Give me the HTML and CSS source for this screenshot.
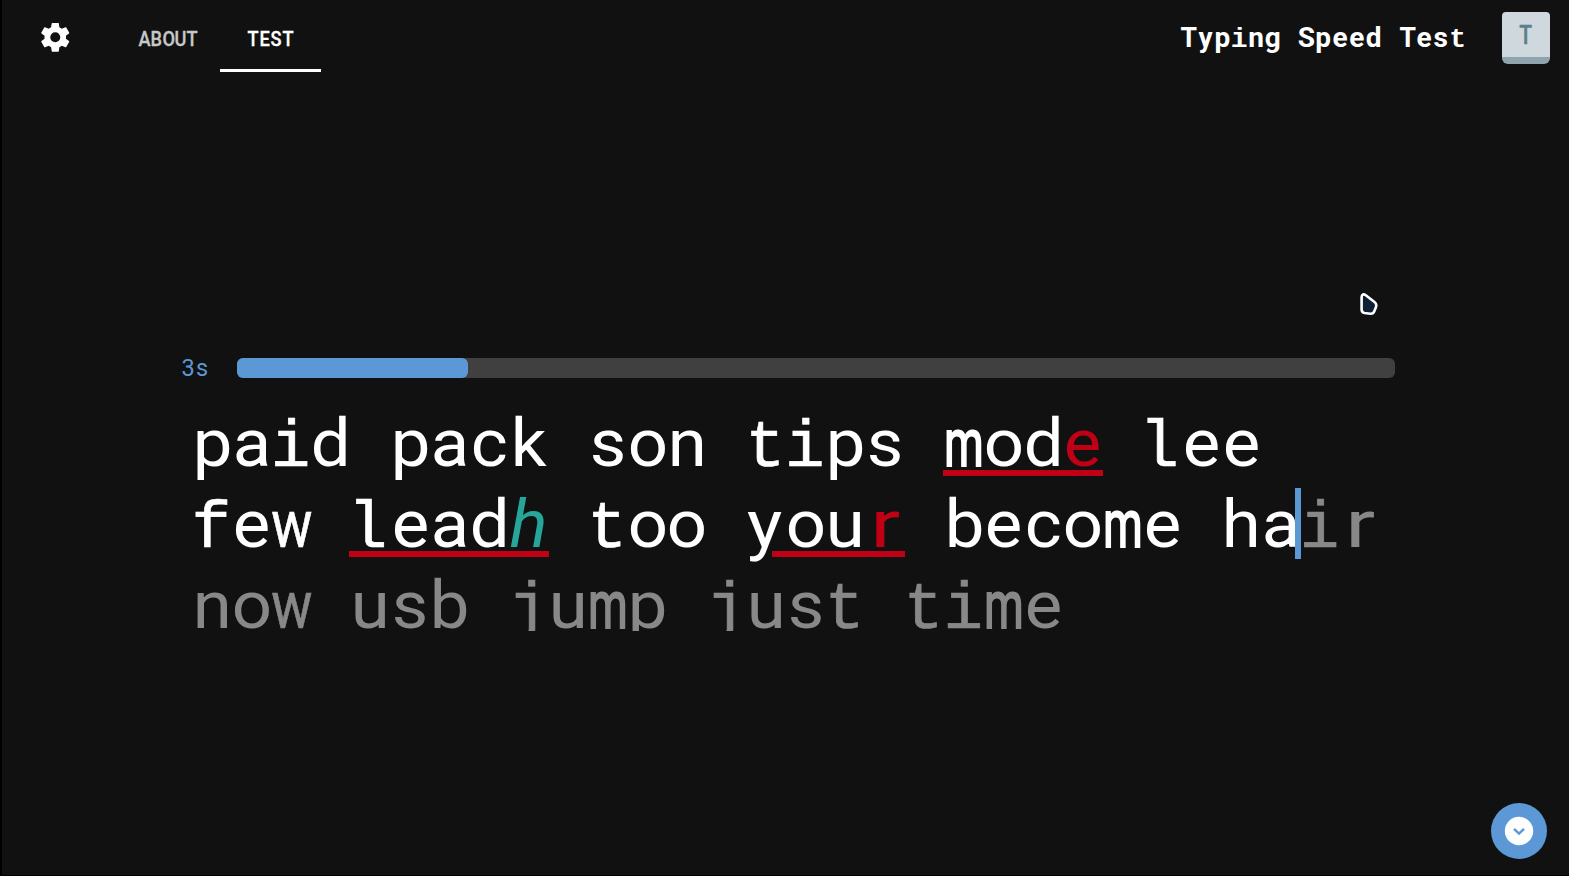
FILE: index.html
```html
<!DOCTYPE html>
<html lang="en">
<head>
<meta charset="utf-8">
<title>Typing Speed Test</title>
<link rel="stylesheet" href="styles.css">
</head>
<body>
<div class="app">
  <header class="topbar">
    <svg class="gear" viewBox="0 0 24 24"><path d="M12 15.5A3.5 3.5 0 0 1 8.5 12 3.5 3.5 0 0 1 12 8.5a3.5 3.5 0 0 1 3.5 3.5 3.5 3.5 0 0 1-3.5 3.5m7.43-2.53c.04-.32.07-.64.07-.97s-.03-.66-.07-1l2.11-1.63c.19-.15.24-.42.12-.64l-2-3.46c-.12-.22-.39-.31-.61-.22l-2.49 1c-.52-.39-1.06-.73-1.69-.98l-.37-2.65A.506.506 0 0 0 14 2h-4c-.25 0-.46.18-.5.42l-.37 2.65c-.63.25-1.17.59-1.69.98l-2.49-1c-.22-.09-.49 0-.61.22l-2 3.46c-.13.22-.07.49.12.64L4.57 11c-.04.34-.07.67-.07 1s.03.65.07.97l-2.11 1.66c-.19.15-.25.42-.12.64l2 3.46c.12.22.39.3.61.22l2.49-1.01c.52.4 1.06.74 1.69.99l.37 2.65c.04.24.25.42.5.42h4c.25 0 .46-.18.5-.42l.37-2.65c.63-.26 1.17-.59 1.69-.99l2.49 1.01c.22.08.49 0 .61-.22l2-3.46c.12-.22.07-.49-.12-.64z"/></svg>
    <nav class="tabs">
      <a class="tab"><span class="cells">ABOUT</span></a>
      <a class="tab active"><span class="cells">TEST</span></a>
    </nav>
    <h1 class="title"><span class="cells">Typing</span><span class="cells">Speed</span><span class="cells">Test</span></h1>
    <div class="key"><span>T</span></div>
  </header>

  <main class="test">
    <div class="timer">
      <span class="seconds cells">3s</span>
      <div class="track"><div class="fill" style="width:19.95%"></div></div>
    </div>
    <div class="words">
      <div class="line typed">
        <span class="word cells">paid</span><span class="word cells">pack</span><span class="word cells">son</span><span class="word cells">tips</span>
        <span class="word wrong"><span class="cells">mod</span><span class="cells miss">e</span></span>
        <span class="word cells">lee</span>
      </div>
      <div class="line typed">
        <span class="word cells">few</span>
        <span class="word wrong"><span class="cells">lead</span><span class="cells extra">h</span></span>
        <span class="word cells">too</span>
        <span class="word wrong skip"><span class="cells">you</span><span class="cells miss">r</span></span>
        <span class="word cells">become</span>
        <span class="word current"><span class="cells">ha</span><span class="caret"></span><span class="cells todo">ir</span></span>
      </div>
      <div class="line todo">
        <span class="word cells">now</span><span class="word cells">usb</span><span class="word cells">jump</span><span class="word cells">just</span><span class="word cells">time</span>
      </div>
    </div>
  </main>

  <svg class="pointer" viewBox="0 0 20 26"><path d="M3.2 3.2Q4.5 1.6 6.5 3L15.5 10Q18 12 17 15L15.2 19.5Q14.2 22 11.5 21.7L5.5 21Q2.6 20.5 2.6 17.5V5.5Q2.6 4 3.2 3.2Z"/></svg>
  <div class="fab">
    <svg viewBox="0 0 56 56"><circle cx="28" cy="28" r="14.2"/><path d="M23 25.8 28 30.6 33 25.8"/></svg>
  </div>
</div>
<script src="cells.js"></script>
</body>
</html>
```
FILE: styles.css
```css
* { box-sizing: border-box; }
body { margin: 0; background: #000; }
.app {
  position: relative;
  height: 875px;
  margin-left: 2px;
  background: #111;
  color: #fff;
  font-family: Roboto, sans-serif;
  overflow: hidden;
}

/* Fixed-pitch lettering */
.cells { display: inline-flex; align-items: baseline; }
.cell { display: flex; justify-content: center; width: .6em; flex: none; white-space: pre; }
.cell b { display: block; font-weight: inherit; transform-origin: 50% 50%; }
.slab b { font-family: "Liberation Mono", monospace; }

.topbar { display: flex; align-items: flex-start; height: 88px; padding-left: 35.5px; padding-right: 19px; }
.gear { width: 34.5px; height: 34.5px; margin-top: 20.3px; fill: #fff; }
.tabs { display: flex; margin-left: 42px; }
.tab {
  height: 72px;
  padding: 0 23px 0 25px;
  line-height: 79px;
  font-size: 19.8px;
  font-weight: 500;
  color: #c8c8c8;
  border-bottom: 3px solid transparent;
}
.tab .cell { width: 11.75px; }
.tab .cell b { transform: scaleX(.92); -webkit-text-stroke: .3px currentColor; }
.tab.active { width: 101px; margin-left: -1px; padding: 0 27px; color: #fff; border-color: #fff; }
.title { display: flex; gap: 16.8px; margin: 0 36px 0 auto; font-size: 28px; line-height: 76px; font-weight: 700; }
.title .g-T b { transform: scaleX(.95); }
.key {
  width: 48px;
  height: 52px;
  margin-top: 12.4px;
  border-radius: 4px 4px 6px 6px;
  background: #cfd8dc;
  border-bottom: 7px solid #90a4ae;
  color: #607d8b;
  font-size: 25px;
  font-weight: 500;
  line-height: 47px;
  text-align: center;
}
.key span { display: inline-block; transform: scaleX(.84); -webkit-text-stroke: .4px currentColor; }

.test { padding: 264px 174px 0 189px; }
.timer { display: flex; align-items: center; height: 31px; margin-left: -10px; }
.seconds { width: 56px; font-size: 23.5px; color: #5b98d5; padding-top: 1px; }
.track { flex: 1; height: 20px; border-radius: 6px; background: #404040; }
.fill { height: 100%; border-radius: 6px; background: #5b98d5; }

.words { height: 228px; margin-top: 20px; overflow: hidden; font-size: 66px; }
.line { display: flex; align-items: baseline; gap: 39.5px; height: 81px; line-height: 81px; white-space: nowrap; }
.line .cell { padding-left: 3px; }
.line .cell b { flex: none; margin: 0 -10px; transform: scaleX(1.07); }
.line .slab b { transform: translateX(-1px); -webkit-text-stroke: .01em currentColor; }
.line .g-l b { transform: translateX(-3px); }
.line .g-m b { transform: scaleX(.68); -webkit-text-stroke: .03em currentColor; }
.line .g-w b { transform: scaleX(.83); -webkit-text-stroke: .01em currentColor; }
.line .g-r b { transform: scaleX(1.34); }
.line .g-y b { transform: translateX(-2px) scaleX(1.13); }
.line.typed { color: #fff; }
.todo { color: #888; }
.word { position: relative; display: inline-flex; align-items: baseline; }
.miss { color: #c00014; }
.extra { color: #26a69a; font-style: italic; }
.wrong::after {
  content: "";
  position: absolute;
  left: 0;
  right: -2px;
  top: 66.5px;
  height: 6.5px;
  background: #c00014;
}
.skip::after { left: 27px; }
.caret { position: absolute; left: 75px; top: 4px; width: 6px; height: 71px; background: #5b98d5; z-index: 1; }

.pointer { position: absolute; left: 1357px; top: 292px; width: 20px; height: 26px; fill: #0c2038; stroke: #fff; stroke-width: 2.6; }
.fab { position: absolute; right: 22px; bottom: 16.5px; width: 56px; height: 56px; border-radius: 50%; background: #5b98d5; }
.fab svg { display: block; }
.fab circle { fill: #fff; }
.fab path { fill: none; stroke: #5b98d5; stroke-width: 2.4; }
```
FILE: cells.js
```js
// Sets each character of a .cells element in its own fixed-width cell.
const slab = "iljtf";
document.querySelectorAll(".cells").forEach(el => {
  const text = el.textContent;
  el.textContent = "";
  for (const ch of text) {
    const cell = document.createElement("span");
    cell.className = "cell g-" + ch + (slab.includes(ch) ? " slab" : "");
    const glyph = document.createElement("b");
    glyph.textContent = ch;
    cell.append(glyph);
    el.append(cell);
  }
});
```
